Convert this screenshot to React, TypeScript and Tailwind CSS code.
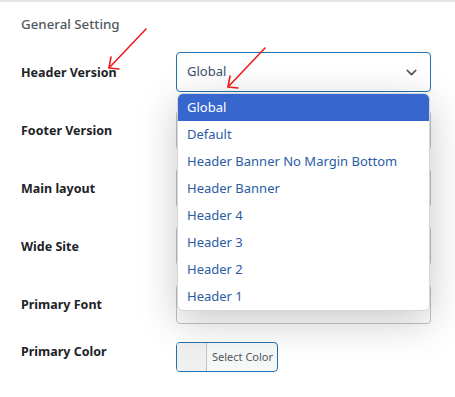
import { ChevronDown } from "lucide-react";

const options = [
  "Global",
  "Default",
  "Header Banner No Margin Bottom",
  "Header Banner",
  "Header 4",
  "Header 3",
  "Header 2",
  "Header 1",
];

const rows = ["Footer Version", "Main layout", "Wide Site"];

function Arrow({ className }: { className: string }) {
  return (
    <svg className={className} width="42" height="46" viewBox="0 0 42 46" fill="none">
      <path d="M40 1 L3 40" stroke="#ee1c1c" strokeWidth="1.6" strokeLinecap="round" />
      <path d="M3 40 L5 29 M3 40 L13 41" stroke="#ee1c1c" strokeWidth="1.6" strokeLinecap="round" />
    </svg>
  );
}

function PlainSelect({ value }: { value?: string }) {
  return (
    <div className="flex h-10 w-[255px] items-center rounded border border-[#c3c4c7] bg-white px-[10px] text-[13px] text-[#8c8f94]">
      {value}
    </div>
  );
}

export default function App() {
  return (
    <div
      className="relative h-[397px] w-[455px] overflow-hidden border-t-2 border-[#e6e6e8] bg-white"
      style={{ fontFamily: '"Noto Sans", "Open Sans", sans-serif' }}
    >
      <div className="pl-[21px] pt-[12px]">
        <h2 className="text-[13.3px] font-medium leading-5 text-[#50575e]">General Setting</h2>

        <div className="mt-[18px] grid grid-cols-[155px_255px] items-center gap-y-[18px]">
          <div className="pt-[2px] text-[12.5px] font-bold text-[#1d2327]">Header Version</div>
          <div className="relative">
            <div className="flex h-10 items-center justify-between rounded border border-[#2271b1] bg-white pl-[10px] pr-[10px] text-[13px] text-[#3b5071]">
              Global
              <ChevronDown size={17} strokeWidth={2.2} className="text-[#50575e]" />
            </div>
            <ul className="absolute left-[1px] top-[41px] z-10 w-[253px] overflow-hidden rounded-md border border-[#d6d6d6] bg-white shadow-[0_10px_40px_rgba(0,0,0,0.22)]">
              {options.map((o, i) => (
                <li
                  key={o}
                  className={
                    i === 0
                      ? "flex h-[27px] items-center bg-[#3866cf] px-[9px] text-[13px] text-white"
                      : "flex h-[27px] items-center px-[9px] text-[13px] text-[#2b5ca3]"
                  }
                >
                  {o}
                </li>
              ))}
            </ul>
          </div>

          {rows.map((r) => (
            <div key={r} className="contents">
              <div className="pt-[2px] text-[12.5px] font-bold text-[#1d2327]">{r}</div>
              <PlainSelect />
            </div>
          ))}

          <div className="pt-[2px] text-[12.5px] font-bold text-[#1d2327]">Primary Font</div>
          <PlainSelect value="Global" />

          <div className="self-start pt-[1px] text-[12.5px] font-bold text-[#1d2327]">Primary Color</div>
          <div className="flex h-[30px] w-[102px] overflow-hidden rounded border border-[#2271b1] bg-[#f6f7f7]">
            <div className="w-[30px] border-r border-[#c3c4c7] bg-[#f0f0f1]" />
            <div className="flex flex-1 items-center pl-[5px] text-[11px] text-[#50575e]">Select Color</div>
          </div>
        </div>
      </div>

      <Arrow className="absolute left-[106px] top-[26px] z-20" />
      <Arrow className="absolute left-[225px] top-[45px] z-20" />
    </div>
  );
}
